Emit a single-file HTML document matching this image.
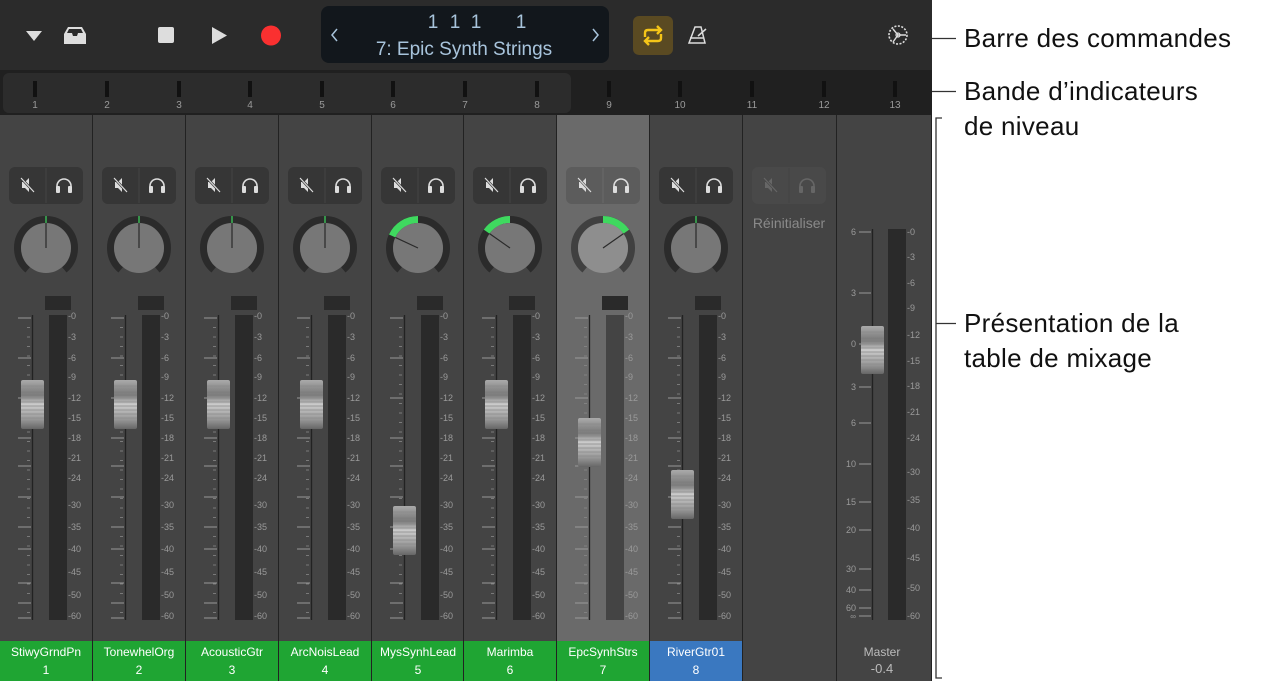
<!DOCTYPE html>
<html><head><meta charset="utf-8">
<style>
*{margin:0;padding:0;box-sizing:border-box}
body{width:1274px;height:681px;background:#fff;position:relative;overflow:hidden;font-family:"Liberation Sans",sans-serif}
.abs{position:absolute}
#tb{left:0;top:0;width:932px;height:70px;background:#2b2b2b}
#lv{left:0;top:70px;width:932px;height:45px;background:#202020}
#mx{left:0;top:115px;width:932px;height:566px;background:#222;overflow:hidden}
.ann{position:absolute;left:964px;font-size:26px;color:#111;line-height:35px;letter-spacing:0.3px;white-space:nowrap}
</style></head><body>
<div id="tb" class="abs">
 <svg class="abs" style="left:0;top:0" width="932" height="70" font-family="Liberation Sans">
  <path d="M26 31 L42 31 L34 41Z" fill="#ddd"/>
  <path d="M64 34 L68 27 L82 27 L86 34 L86 44 L64 44Z" fill="#ddd"/>
  <path d="M67 33 L69 29 L81 29 L83 33 L78 33 L77 36 L73 36 L72 33Z" fill="#2b2b2b"/>
  <rect x="158" y="27" width="16" height="16" rx="2" fill="#ddd"/>
  <path d="M212 27 L227 35.5 L212 44Z" fill="#ddd"/>
  <circle cx="271" cy="35.5" r="10" fill="#fa3030"/>
  <rect x="321" y="6" width="288" height="57" rx="8" fill="#12171c"/>
  <path d="M337 29 L332 35 L337 41" stroke="#a8c4dc" stroke-width="1.5" fill="none"/>
  <path d="M593 29 L598 35 L593 41" stroke="#a8c4dc" stroke-width="1.5" fill="none"/>
  <text x="433" y="28" font-size="19" fill="#a8c4dc" text-anchor="middle">1</text>
  <text x="455" y="28" font-size="19" fill="#a8c4dc" text-anchor="middle">1</text>
  <text x="476" y="28" font-size="19" fill="#a8c4dc" text-anchor="middle">1</text>
  <text x="521" y="28" font-size="19" fill="#a8c4dc" text-anchor="middle">1</text>
  <text x="464" y="55" font-size="19" fill="#a8c4dc" text-anchor="middle">7: Epic Synth Strings</text>
  <rect x="633" y="16" width="40" height="39" rx="6" fill="#5a4a22"/>
  <path d="M645 37 V33 Q645 30 648 30 H661 M657 26 L661 30 L657 34 M661 34 V38 Q661 41 658 41 H645 M649 37 L645 41 L649 45" stroke="#f5c518" stroke-width="2.4" fill="none"/>
  <path d="M689 43 L695 27 L701 27 L705 43Z M690 38 L704 38 M698 36 L706 29" stroke="#ddd" stroke-width="1.5" fill="none"/>
  <circle cx="898" cy="35" r="9" stroke="#ddd" stroke-width="1.6" fill="none" stroke-dasharray="2 1.5"/>
  <circle cx="898" cy="35" r="2" stroke="#ddd" stroke-width="1.2" fill="none"/>
  <path d="M898 35 L906 35 M898 35 L893 29 M898 35 L893 42" stroke="#ddd" stroke-width="1.4"/>
 </svg>
</div>
<div id="lv" class="abs"><div class="abs" style="left:3px;top:3px;width:568px;height:40px;background:#2c2c2c;border-radius:6px"></div><div id="lvin"></div></div>
<div id="mx" class="abs"></div>
<div class="ann" style="top:21px">Barre des commandes</div>
<div class="ann" style="top:74px">Bande d’indicateurs<br>de niveau</div>
<div class="ann" style="top:306px">Présentation de la<br>table de mixage</div>
<svg class="abs" style="left:932px;top:0" width="30" height="681">
 <path d="M0 38.5 H24 M0 91.5 H24 M10 118 H4 V678 H10 M4 323.5 H24" stroke="#333" stroke-width="1.3" fill="none"/>
</svg>
<script>
var lv=document.getElementById('lvin'),h='';
var xs=[35,107,179,250,322,393,465,537,609,680,752,824,895];
xs.forEach(function(x,i){h+='<div class="abs" style="left:'+(x-2)+'px;top:11px;width:4px;height:16px;background:#111"></div><div class="abs" style="left:'+(x-10)+'px;top:30px;width:20px;text-align:center;font-size:10px;color:#9a9a9a">'+(i+1)+'</div>';});
lv.innerHTML=h;
var mx=document.getElementById('mx'),s='';
var b=[0,93,186,279,372,464,557,650,743,837,932];
var names=['StiwyGrndPn','TonewhelOrg','AcousticGtr','ArcNoisLead','MysSynhLead','Marimba','EpcSynhStrs','RiverGtr01'];
var fad=[380,380,380,380,506,380,418,470];
var ang=[0,0,0,0,-65,-55,55,0];
var db=[[0,316],[3,337],[6,358],[9,377],[12,398],[15,418],[18,438],[21,458],[24,478],[30,505],[35,527],[40,549],[45,572],[50,595],[60,616]];
function pt(cx,cy,r,a){a=a*Math.PI/180;return [cx+r*Math.sin(a),cy-r*Math.cos(a)];}
function arc(cx,cy,r,a1,a2){var p=pt(cx,cy,r,a1),q=pt(cx,cy,r,a2);var l=Math.abs(a2-a1)>180?1:0;var sw=a2>a1?1:0;return 'M'+p[0]+' '+p[1]+' A'+r+' '+r+' 0 '+l+' '+sw+' '+q[0]+' '+q[1];}
for(var i=0;i<10;i++){
 var x0=b[i],w=b[i+1]-b[i]-1;
 var bg=i==6?'#6a6a6a':'#444';
 s+='<div class="abs" style="left:'+x0+'px;top:0;width:'+w+'px;height:566px;background:'+bg+'"></div>';
}
mx.innerHTML=s;
var svg='<svg class="abs" style="left:0;top:0" width="932" height="566" font-family="Liberation Sans"><defs><linearGradient id="gf" x1="0" y1="0" x2="0" y2="1"><stop offset="0" stop-color="#aaa"/><stop offset="0.3" stop-color="#777"/><stop offset="0.5" stop-color="#ccc"/><stop offset="0.8" stop-color="#999"/><stop offset="1" stop-color="#666"/></linearGradient></defs><g transform="translate(0,-115)">';
for(var i=0;i<9;i++){
 var x0=b[i];
 var dis=i==8;
 svg+='<rect x="'+(x0+9)+'" y="167" width="74" height="37" rx="6" fill="'+(dis?'#494949':(i==6?'#5c5c5c':'#363636'))+'"/>';
 svg+='<line x1="'+(x0+46)+'" y1="168" x2="'+(x0+46)+'" y2="203" stroke="'+(dis?'#444':(i==6?'#6a6a6a':'#444'))+'"/>';
 var ic=dis?'#666':'#ddd';
 var mxp=x0+28,cy=185,bgc=dis?'#494949':(i==6?'#5c5c5c':'#363636');
 svg+='<path d="M'+(mxp-6)+' '+(cy-3)+' h3 l4 -4 v14 l-4 -4 h-3z" fill="'+ic+'"/><line x1="'+(mxp-7)+'" y1="'+(cy-7)+'" x2="'+(mxp+6)+'" y2="'+(cy+7)+'" stroke="'+bgc+'" stroke-width="2.5"/><line x1="'+(mxp-7)+'" y1="'+(cy-7)+'" x2="'+(mxp+6)+'" y2="'+(cy+7)+'" stroke="'+ic+'" stroke-width="1.2"/>';
 var hx=x0+64;
 svg+='<path d="M'+(hx-7)+' '+(cy+6)+' v-5 a7 7 0 0 1 14 0 v5" stroke="'+ic+'" stroke-width="1.6" fill="none"/><rect x="'+(hx-8)+'" y="'+(cy+1)+'" width="4" height="7" rx="1" fill="'+ic+'"/><rect x="'+(hx+4)+'" y="'+(cy+1)+'" width="4" height="7" rx="1" fill="'+ic+'"/>';
 if(dis){svg+='<text x="'+(x0+46)+'" y="228" font-size="14" fill="#8a8a8a" text-anchor="middle">Réinitialiser</text>';continue;}
 var cx=x0+46,ky=248;
 svg+='<path d="'+arc(cx,ky,28.5,-140,140)+'" stroke="'+(i==6?'#404040':'#2b2b2b')+'" stroke-width="7" fill="none"/>';
 if(ang[i]!=0)svg+='<path d="'+arc(cx,ky,28.5,0,ang[i])+'" stroke="#3fd95f" stroke-width="7" fill="none"/>';
 else svg+='<line x1="'+cx+'" y1="'+(ky-32)+'" x2="'+cx+'" y2="'+(ky-25)+'" stroke="#3fd95f" stroke-width="1.2"/>';
 svg+='<circle cx="'+cx+'" cy="'+ky+'" r="25" fill="'+(i==6?'#8e8e8e':'#777')+'"/>';
 var n=pt(cx,ky,25,ang[i]);
 svg+='<line x1="'+cx+'" y1="'+ky+'" x2="'+n[0]+'" y2="'+n[1]+'" stroke="#2a2a2a" stroke-width="1.2"/>';
 svg+='<rect x="'+(x0+45)+'" y="296" width="26" height="14" fill="#2a2a2a"/>';
 svg+='<line x1="'+(x0+32.5)+'" y1="315" x2="'+(x0+32.5)+'" y2="620" stroke="#222" stroke-width="1.3"/>';
 svg+='<rect x="'+(x0+49)+'" y="315" width="18" height="305" fill="'+(i==6?'#444':'#2a2a2a')+'"/>';
 for(var t=318;t<620;t+=9.5){svg+='<line x1="'+(x0+27)+'" y1="'+t+'" x2="'+(x0+30)+'" y2="'+t+'" stroke="#888" stroke-width="0.8"/>';}
 [318,358,398,438,466,497,527,549,583,603,618].forEach(function(t){svg+='<line x1="'+(x0+18)+'" y1="'+t+'" x2="'+(x0+31)+'" y2="'+t+'" stroke="#999" stroke-width="1"/>';});
 db.forEach(function(d){svg+='<text x="'+(x0+68)+'" y="'+(d[1]+3)+'" font-size="9" fill="#9a9a9a">-'+d[0]+'</text>';});
 var fy=fad[i];
 svg+='<rect x="'+(x0+21)+'" y="'+fy+'" width="23" height="49" rx="2" fill="url(#gf)"/>';
 for(var k=6;k<46;k+=4)svg+='<line x1="'+(x0+21)+'" y1="'+(fy+k)+'" x2="'+(x0+44)+'" y2="'+(fy+k)+'" stroke="#8a8a8a" stroke-width="0.7"/>';
 var col=i==7?'#3a78c0':'#1fa533';
 svg+='<rect x="'+x0+'" y="641" width="'+(b[i+1]-b[i]-1)+'" height="40" fill="'+col+'"/>';
 svg+='<text x="'+(x0+46)+'" y="656" font-size="12" fill="#fff" text-anchor="middle">'+names[i]+'</text>';
 svg+='<text x="'+(x0+46)+'" y="674" font-size="12" fill="#fff" text-anchor="middle">'+(i+1)+'</text>';
}
svg+='<line x1="872.5" y1="229" x2="872.5" y2="620" stroke="#222" stroke-width="1.3"/>';
svg+='<rect x="888" y="229" width="18" height="391" fill="#2a2a2a"/>';
[[6,232],[3,293],[0,344],[3,387],[6,423],[10,464],[15,502],[20,530],[30,569],[40,590],[60,608]].forEach(function(d){svg+='<line x1="859" y1="'+d[1]+'" x2="871" y2="'+d[1]+'" stroke="#999"/><text x="856" y="'+(d[1]+3)+'" font-size="9" fill="#9a9a9a" text-anchor="end">'+d[0]+'</text>';});
svg+='<line x1="859" y1="616" x2="871" y2="616" stroke="#999"/><text x="856" y="619" font-size="8" fill="#9a9a9a" text-anchor="end">∞</text>';
[[0,232],[3,257],[6,283],[9,308],[12,335],[15,361],[18,386],[21,412],[24,438],[30,472],[35,500],[40,528],[45,558],[50,588],[60,616]].forEach(function(d){svg+='<text x="907" y="'+(d[1]+3)+'" font-size="9" fill="#9a9a9a">-'+d[0]+'</text>';});
svg+='<rect x="861" y="326" width="23" height="48" rx="2" fill="url(#gf)"/>';
for(var k=6;k<45;k+=4)svg+='<line x1="861" y1="'+(326+k)+'" x2="884" y2="'+(326+k)+'" stroke="#8a8a8a" stroke-width="0.7"/>';
svg+='<text x="882" y="656" font-size="12" fill="#bbb" text-anchor="middle">Master</text><text x="882" y="673" font-size="13" fill="#bbb" text-anchor="middle">-0.4</text>';
svg+='</g></svg>';
mx.innerHTML+=svg;
</script>
</body></html>
